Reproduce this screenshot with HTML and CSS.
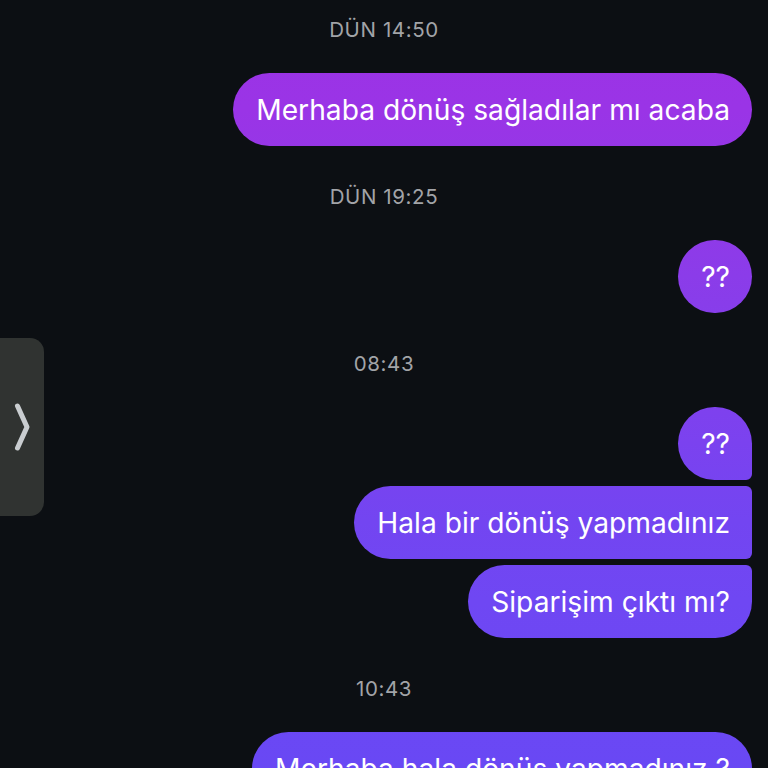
FILE: index.html
```html
<!DOCTYPE html>
<html lang="tr">
<head>
<meta charset="utf-8">
<link rel="stylesheet" href="styles.css">
</head>
<body>
<main class="thread">
  <section class="block">
    <div class="stamp">DÜN 14:50</div>
    <div class="group">
      <div class="bubble pill">Merhaba dönüş sağladılar mı acaba</div>
    </div>
  </section>
  <section class="block">
    <div class="stamp">DÜN 19:25</div>
    <div class="group">
      <div class="bubble pill">??</div>
    </div>
  </section>
  <section class="block">
    <div class="stamp">08:43</div>
    <div class="group">
      <div class="bubble first">??</div>
      <div class="bubble middle">Hala bir dönüş yapmadınız</div>
      <div class="bubble last">Siparişim çıktı mı?</div>
    </div>
  </section>
  <section class="block">
    <div class="stamp">10:43</div>
    <div class="group">
      <div class="bubble pill">Merhaba hala dönüş yapmadınız ?</div>
    </div>
  </section>
</main>
<div class="side-tab">
  <svg class="chev" width="44" height="178" viewBox="0 0 44 178"><path d="M17.5 68 L27 89 L17.5 110" fill="none" stroke="#c9cdd0" stroke-width="5" stroke-linecap="round" stroke-linejoin="round"/></svg>
</div>
</body>
</html>
```
FILE: styles.css
```css
html, body {
  margin: 0;
  padding: 0;
  background: #0c0f13;
  height: 768px;
  overflow: hidden;
}
body {
  font-family: Inter, "Noto Sans", sans-serif;
  position: relative;
}
.thread {
  display: flex;
  flex-direction: column;
  padding: 18px 16px 0 16px;
}
.block {
  display: flex;
  flex-direction: column;
}
.block + .block {
  margin-top: 39px;
}
.stamp {
  height: 24px;
  line-height: 24px;
  text-align: center;
  font-size: 20.5px;
  color: #a2a4a8;
  margin-bottom: 31px;
  letter-spacing: 0.6px;
}
.group {
  display: flex;
  flex-direction: column;
  align-items: flex-end;
  gap: 6px;
}
.bubble {
  height: 73px;
  box-sizing: border-box;
  padding: 0 22px 0 23px;
  display: flex;
  align-items: center;
  color: #ffffff;
  font-size: 28.2px;
  white-space: nowrap;
  border-radius: 37px;
  background: linear-gradient(180deg, #9c33e5 0px, #9a34e6 110px, #8b3ce9 276px, #7b42ef 442px, #7345f1 521px, #6f47f3 600px, #6948f4 768px) fixed;
}
.first {
  border-radius: 37px 37px 6px 37px;
}
.middle {
  border-radius: 37px 6px 6px 37px;
}
.last {
  border-radius: 37px 6px 37px 37px;
}
.side-tab {
  position: absolute;
  left: 0;
  top: 338px;
  width: 44px;
  height: 178px;
  background: #303331;
  border-radius: 0 14px 14px 0;
}
.chev {
  display: block;
}
```
